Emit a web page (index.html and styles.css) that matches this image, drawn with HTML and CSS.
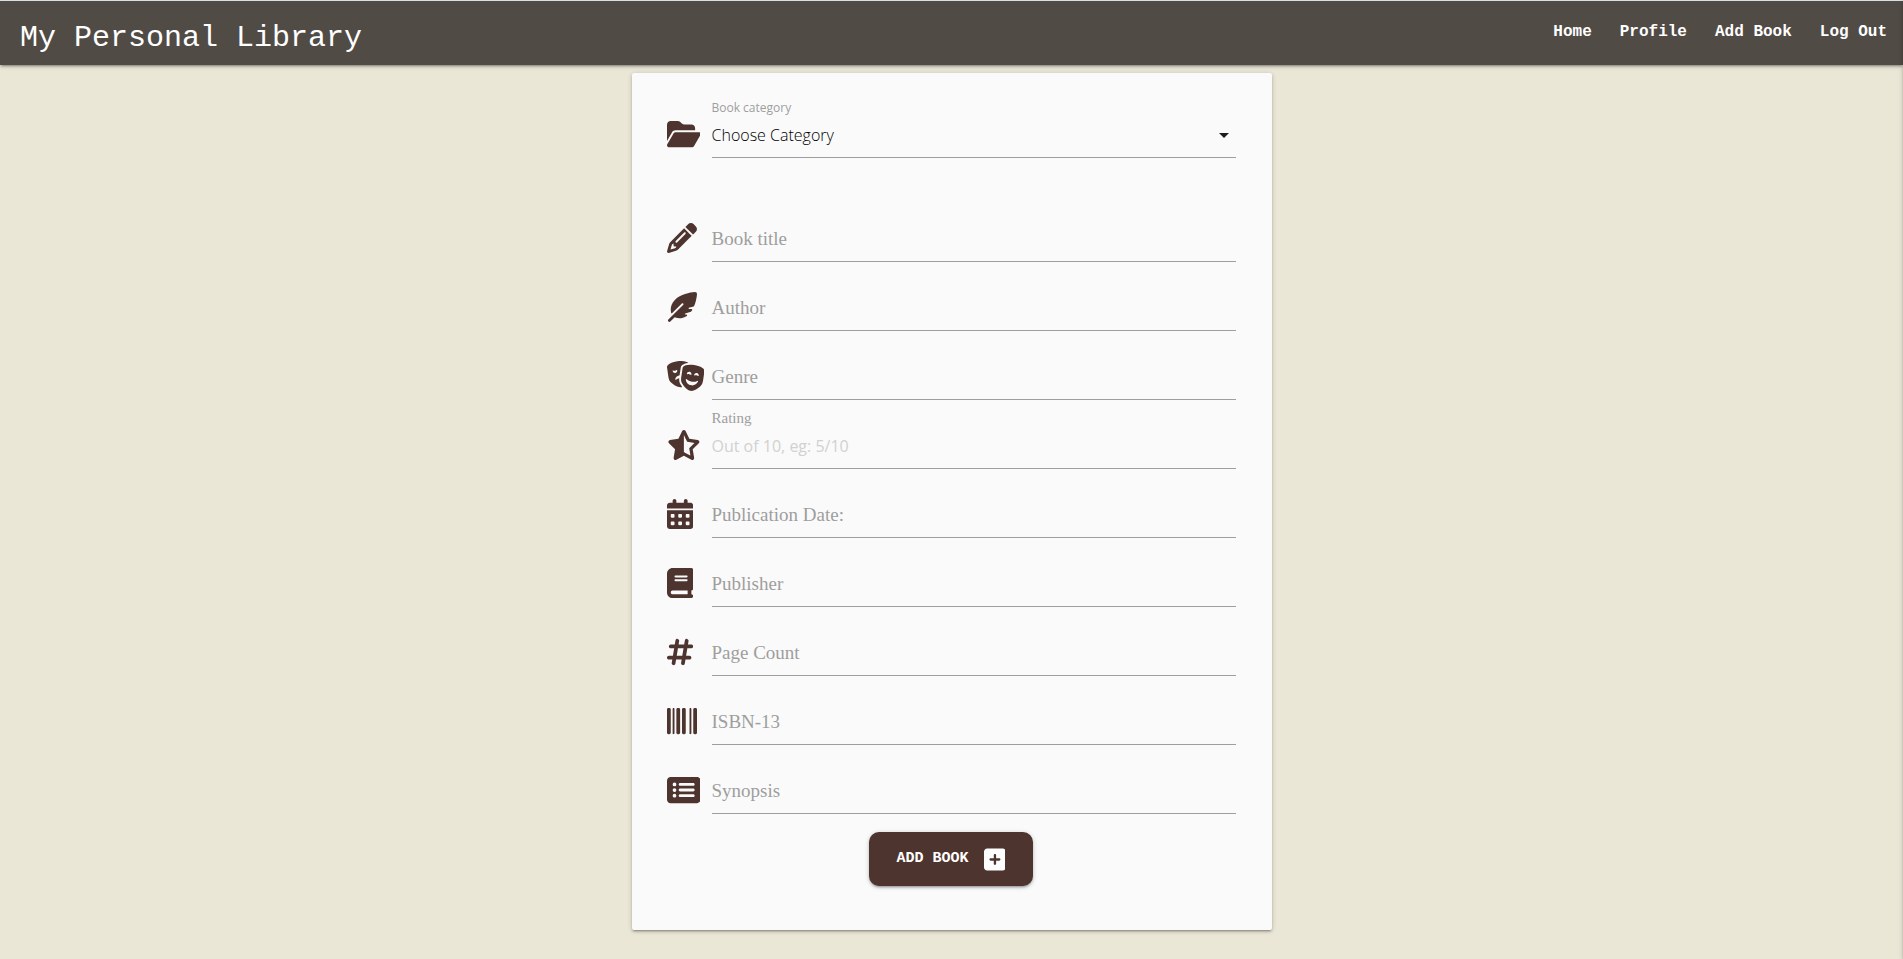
FILE: index.html
```html
<!DOCTYPE html>
<html lang="en">
<head>
<meta charset="utf-8">
<meta name="viewport" content="width=device-width, initial-scale=1">
<title>My Personal Library</title>
<link rel="stylesheet" href="styles.css">
</head>
<body>
<header class="navbar">
  <a class="logo" href="#">My Personal Library</a>
  <nav class="links">
    <a href="#">Home</a>
    <a href="#">Profile</a>
    <a href="#">Add Book</a>
    <a href="#">Log Out</a>
  </nav>
</header>
<aside class="drawer" aria-hidden="true"></aside>
<main>
  <form class="card">
    <div class="row row-select">
      <svg class="icon" viewBox="0 0 576 512"><path d="M88.7 223.8L0 375.8V96C0 60.7 28.7 32 64 32H181.5c17 0 33.3 6.7 45.3 18.7l26.5 26.5c12 12 28.3 18.7 45.3 18.7H416c35.3 0 64 28.7 64 64v32H144c-22.8 0-43.8 12.1-55.3 31.8zm27.6 16.1C122.1 230 132.6 224 144 224H544c11.5 0 22 6.1 27.7 16.1s5.7 22.2-.1 32.1l-112 192C453.9 474 443.4 480 432 480H32c-11.5 0-22-6.1-27.7-16.1s-5.7-22.2 .1-32.1l112-192z"/></svg>
      <div class="field">
        <label class="raised sans" for="category">Book category</label>
        <select id="category"><option>Choose Category</option></select>
        <svg class="caret" viewBox="0 0 24 24"><path d="M7 10l5 5 5-5z"/></svg>
      </div>
    </div>
    <div class="row">
      <svg class="icon" viewBox="0 0 512 512"><path d="M410.3 231l11.3-11.3-33.9-33.9-62.1-62.1L291.7 89.8l-11.3 11.3-22.6 22.6L58.6 322.9c-10.4 10.4-18 23.3-22.2 37.4L1 480.7c-2.5 8.4-.2 17.5 6.1 23.7s15.3 8.5 23.7 6.1l120.3-35.4c14.1-4.2 27-11.8 37.4-22.2L387.7 253.7 410.3 231zM160 399.4l-9.1 22.7c-4 3.1-8.5 5.4-13.3 6.9L59.4 452l23-78.1c1.4-4.9 3.8-9.4 6.9-13.3l22.7-9.1v32c0 8.8 7.2 16 16 16h32zM362.7 18.7L348.3 33.2 325.7 55.8 314.3 67.1l33.9 33.9 62.1 62.1 33.9 33.9 11.3-11.3 22.6-22.6 14.5-14.5c25-25 25-65.5 0-90.5L453.3 18.7c-25-25-65.5-25-90.5 0zm-47.4 168l-144 144c-6.2 6.2-16.4 6.2-22.6 0s-6.2-16.4 0-22.6l144-144c6.2-6.2 16.4-6.2 22.6 0s6.2 16.4 0 22.6z"/></svg>
      <div class="field"><label for="title">Book title</label><input id="title" type="text"></div>
    </div>
    <div class="row">
      <svg class="icon" viewBox="0 0 512 512"><path d="M278.5 215.6L23 471c-9.4 9.4-9.4 24.6 0 33.9s24.6 9.4 33.9 0l74.8-74.8c7.4 4.6 15.3 8.2 23.8 10.5C200.3 452.8 270 454.5 338 409.4c12.2-8.1 5.8-25.4-8.8-25.4l-16.1 0c-5.1 0-9.2-4.1-9.2-9.2c0-4.1 2.7-7.6 6.5-8.8l97.7-29.3c3.4-1 6.4-3.1 8.4-6.1c4.4-6.4 8.6-12.9 12.6-19.6c6.2-10.3-1.5-23-13.5-23l-38.6 0c-5.1 0-9.2-4.1-9.2-9.2c0-4.1 2.7-7.6 6.5-8.8l80.9-24.3c4.6-1.4 8.4-4.8 10.2-9.3C494.5 163 507.8 86.1 511.9 36.8c.8-9.9-3-19.6-10-26.6s-16.7-10.8-26.6-10C391.5 7 228.5 40.5 137.4 131.6C57.3 211.7 56.7 302.3 71.3 356.4c2.1 7.9 12 9.6 17.8 3.8L253.6 195.8c6.2-6.2 16.4-6.2 22.6 0c5.4 5.4 6.1 13.6 2.2 19.8z"/></svg>
      <div class="field"><label for="author">Author</label><input id="author" type="text"></div>
    </div>
    <div class="row">
      <svg class="icon" viewBox="0 0 640 512"><path d="M74.6 373.2c41.7 36.1 108 82.5 166.1 73.7c6.1-.9 12.1-2.5 18-4.5c-9.2-12.3-17.3-24.4-24.2-35.4c-21.9-35-28.8-75.2-25.9-113.6c-20.6 4.1-39.2 13-54.7 25.4c-6.5 5.2-16.3 1.3-14.8-7c6.4-33.5 33-60.9 68.2-66.3c2.6-.4 5.3-.7 7.9-.8l19.4-131.3c2-13.8 8-32.7 25-45.9C278.2 53.2 310.5 37 363.2 32.2c-.8-.7-1.6-1.4-2.4-2.1C340.6 14.5 288.4-11.5 175.7 5.6S20.5 63 5.7 83.9C0 91.9-.8 102 .6 111.8L24.8 276.1c5.5 37.3 21.5 72.6 49.8 97.2zm87.7-219.6c4.4-3.1 10.8-2 11.8 3.3c.1 .5 .2 1.1 .3 1.6c3.2 21.8-11.6 42-33.1 45.3s-41.5-11.8-44.7-33.5c-.1-.5-.1-1.1-.2-1.6c-.6-5.4 5.2-8.4 10.3-6.7c9 3 18.8 3.9 28.7 2.4s19.1-5.3 26.8-10.8zM261.6 390c29.4 46.9 79.5 110.9 137.6 119.7s124.5-37.5 166.1-73.7c28.3-24.5 44.3-59.8 49.8-97.2l24.2-164.3c1.4-9.8 .6-19.9-5.1-27.9c-14.8-20.9-57.3-61.2-170-78.3S299.4 77.2 279.2 92.8c-7.8 6-11.5 15.4-12.9 25.2L242.1 282.3c-5.5 37.3-.4 75.8 19.6 107.7zM404.5 235.3c-7.7-5.5-16.8-9.3-26.8-10.8s-19.8-.6-28.7 2.4c-5.1 1.7-10.9-1.3-10.3-6.7c.1-.5 .1-1.1 .2-1.6c3.2-21.8 23.2-36.8 44.7-33.5s36.3 23.5 33.1 45.3c-.1 .5-.2 1.1-.3 1.6c-1 5.3-7.4 6.4-11.8 3.3zm136.2 15.5c-1 5.3-7.4 6.4-11.8 3.3c-7.7-5.5-16.8-9.3-26.8-10.8s-19.8-.6-28.7 2.4c-5.1 1.7-10.9-1.3-10.3-6.7c.1-.5 .1-1.1 .2-1.6c3.2-21.8 23.2-36.8 44.7-33.5s36.3 23.5 33.1 45.3c-.1 .5-.2 1.1-.3 1.6zM530 350.2c-19.6 44.7-66.8 72.5-116.8 64.9s-87.1-48.2-93-96.7c-1-8.3 8.9-12.1 15.2-6.7c23.9 20.8 53.6 35.3 87 40.3s66.1 .1 94.9-12.8c7.6-3.4 16 3.2 12.6 10.9z"/></svg>
      <div class="field"><label for="genre">Genre</label><input id="genre" type="text"></div>
    </div>
    <div class="row">
      <svg class="icon" viewBox="32 0 576 512"><path d="M320 376.4l.1-.1 26.4 14.1 85.2 45.5-16.5-97.6-4.8-28.7 20.7-20.5 70.1-69.3-96.1-14.2-29.3-4.3-12.9-26.6L320.1 86.9l-.1 .3V376.4zm175.1 98.3c2 12-3 24.2-12.9 31.3s-23 8-33.8 2.3L320.1 439.8 191.8 508.3C181 514 167.9 513.1 158 506s-14.9-19.3-12.9-31.3L169.8 329 65.6 225.9c-8.6-8.5-11.7-21.2-7.9-32.7s13.7-19.9 25.7-21.7L227 150.3 291.4 18c5.4-11 16.5-18 28.8-18s23.4 7 28.8 18l64.3 132.3 143.6 21.2c12 1.8 22 10.2 25.7 21.7s.7 24.2-7.9 32.7L470.5 329l24.6 145.7z"/></svg>
      <div class="field"><label class="raised" for="rating">Rating</label><input id="rating" type="text" placeholder="Out of 10, eg: 5/10"></div>
    </div>
    <div class="row">
      <svg class="icon" viewBox="0 0 448 512"><path d="M128 0c17.7 0 32 14.3 32 32V64H288V32c0-17.7 14.3-32 32-32s32 14.3 32 32V64h48c26.5 0 48 21.5 48 48v48H0V112C0 85.5 21.5 64 48 64H96V32c0-17.7 14.3-32 32-32zM0 192H448V464c0 26.5-21.5 48-48 48H48c-26.5 0-48-21.5-48-48V192zm64 80v32c0 8.8 7.2 16 16 16h32c8.8 0 16-7.2 16-16V272c0-8.8-7.2-16-16-16H80c-8.8 0-16 7.2-16 16zm128 0v32c0 8.8 7.2 16 16 16h32c8.8 0 16-7.2 16-16V272c0-8.8-7.2-16-16-16H208c-8.8 0-16 7.2-16 16zm144-16c-8.8 0-16 7.2-16 16v32c0 8.8 7.2 16 16 16h32c8.8 0 16-7.2 16-16V272c0-8.8-7.2-16-16-16H336zM64 400v32c0 8.8 7.2 16 16 16h32c8.8 0 16-7.2 16-16V400c0-8.8-7.2-16-16-16H80c-8.8 0-16 7.2-16 16zm144-16c-8.8 0-16 7.2-16 16v32c0 8.8 7.2 16 16 16h32c8.8 0 16-7.2 16-16V400c0-8.8-7.2-16-16-16H208zm112 16v32c0 8.8 7.2 16 16 16h32c8.8 0 16-7.2 16-16V400c0-8.8-7.2-16-16-16H336c-8.8 0-16 7.2-16 16z"/></svg>
      <div class="field"><label for="date">Publication Date:</label><input id="date" type="text"></div>
    </div>
    <div class="row">
      <svg class="icon" viewBox="0 0 448 512"><path d="M96 0C43 0 0 43 0 96V416c0 53 43 96 96 96H384h32c17.7 0 32-14.3 32-32s-14.3-32-32-32V384c17.7 0 32-14.3 32-32V32c0-17.7-14.3-32-32-32H384 96zm0 384H352v64H96c-17.7 0-32-14.3-32-32s14.3-32 32-32zm32-240c0-8.8 7.2-16 16-16H336c8.8 0 16 7.2 16 16s-7.2 16-16 16H144c-8.8 0-16-7.2-16-16zm16 48H336c8.8 0 16 7.2 16 16s-7.2 16-16 16H144c-8.8 0-16-7.2-16-16s7.2-16 16-16z"/></svg>
      <div class="field"><label for="publisher">Publisher</label><input id="publisher" type="text"></div>
    </div>
    <div class="row">
      <svg class="icon" viewBox="0 0 448 512"><path d="M181.3 32.4c17.4 2.9 29.2 19.4 26.3 36.8L197.8 128h95.1l11.5-69.3c2.9-17.4 19.4-29.2 36.8-26.3s29.2 19.4 26.3 36.8L357.8 128H416c17.7 0 32 14.3 32 32s-14.3 32-32 32H347.1L325.8 320H384c17.7 0 32 14.3 32 32s-14.3 32-32 32H315.1l-11.5 69.3c-2.9 17.4-19.4 29.2-36.8 26.3s-29.2-19.4-26.3-36.8l9.8-58.7H155.1l-11.5 69.3c-2.9 17.4-19.4 29.2-36.8 26.3s-29.2-19.4-26.3-36.8L90.2 384H32c-17.7 0-32-14.3-32-32s14.3-32 32-32h68.9l21.3-128H64c-17.7 0-32-14.3-32-32s14.3-32 32-32h68.9l11.5-69.3c2.9-17.4 19.4-29.2 36.8-26.3zM187.1 192L165.8 320h95.1l21.3-128H187.1z"/></svg>
      <div class="field"><label for="pages">Page Count</label><input id="pages" type="text"></div>
    </div>
    <div class="row">
      <svg class="icon" viewBox="0 0 512 512"><path d="M24 32C10.7 32 0 42.7 0 56V456c0 13.3 10.7 24 24 24H40c13.3 0 24-10.7 24-24V56c0-13.3-10.7-24-24-24H24zm88 0c-8.8 0-16 7.2-16 16V464c0 8.8 7.2 16 16 16s16-7.2 16-16V48c0-8.8-7.2-16-16-16zm72 0c-13.3 0-24 10.7-24 24V456c0 13.3 10.7 24 24 24h16c13.3 0 24-10.7 24-24V56c0-13.3-10.7-24-24-24H184zm96 0c-13.3 0-24 10.7-24 24V456c0 13.3 10.7 24 24 24h16c13.3 0 24-10.7 24-24V56c0-13.3-10.7-24-24-24H280zM448 56V456c0 13.3 10.7 24 24 24h16c13.3 0 24-10.7 24-24V56c0-13.3-10.7-24-24-24H472c-13.3 0-24 10.7-24 24zm-64-8V464c0 8.8 7.2 16 16 16s16-7.2 16-16V48c0-8.8-7.2-16-16-16s-16 7.2-16 16z"/></svg>
      <div class="field"><label for="isbn">ISBN-13</label><input id="isbn" type="text"></div>
    </div>
    <div class="row">
      <svg class="icon" viewBox="0 0 576 512"><path d="M0 96C0 60.7 28.7 32 64 32H512c35.3 0 64 28.7 64 64V416c0 35.3-28.7 64-64 64H64c-35.3 0-64-28.7-64-64V96zM128 288a32 32 0 1 0 0-64 32 32 0 1 0 0 64zm32-128a32 32 0 1 0 -64 0 32 32 0 1 0 64 0zM128 384a32 32 0 1 0 0-64 32 32 0 1 0 0 64zm96-248c-13.3 0-24 10.7-24 24s10.7 24 24 24H448c13.3 0 24-10.7 24-24s-10.7-24-24-24H224zm0 96c-13.3 0-24 10.7-24 24s10.7 24 24 24H448c13.3 0 24-10.7 24-24s-10.7-24-24-24H224zm0 96c-13.3 0-24 10.7-24 24s10.7 24 24 24H448c13.3 0 24-10.7 24-24s-10.7-24-24-24H224z"/></svg>
      <div class="field"><label for="synopsis">Synopsis</label><input id="synopsis" type="text"></div>
    </div>
    <button class="submit" type="submit">
      <span>ADD BOOK</span>
      <svg viewBox="0 0 448 512"><path d="M64 32C28.7 32 0 60.7 0 96V416c0 35.3 28.7 64 64 64H384c35.3 0 64-28.7 64-64V96c0-35.3-28.7-64-64-64H64zM200 344V280H136c-13.3 0-24-10.7-24-24s10.7-24 24-24h64V168c0-13.3 10.7-24 24-24s24 10.7 24 24v64h64c13.3 0 24 10.7 24 24s-10.7 24-24 24H248v64c0 13.3-10.7 24-24 24s-24-10.7-24-24z"/></svg>
    </button>
  </form>
</main>
</body>
</html>
```
FILE: styles.css
```css
*, *::before, *::after {
  box-sizing: border-box;
}

body {
  margin: 0;
  background: #ebe7d7;
  color: #000;
  font-family: "Open Sans", "Noto Sans", sans-serif;
  font-size: 16px;
}

.navbar {
  display: flex;
  justify-content: space-between;
  align-items: center;
  height: 65px;
  padding: 0 16px 0 20px;
  border-top: 1px solid #dadfe0;
  background: #514b46;
  box-shadow: 0 2px 2px 0 rgba(0, 0, 0, 0.14), 0 3px 1px -2px rgba(0, 0, 0, 0.12), 0 1px 5px 0 rgba(0, 0, 0, 0.2);
  font-family: "Liberation Mono", monospace;
  font-weight: 700;
}

.navbar a {
  color: #fff;
  text-decoration: none;
}

.logo {
  padding-top: 10px;
  font-size: 30px;
  font-weight: 400;
}

.links {
  display: flex;
  gap: 28px;
  padding-bottom: 2px;
  font-size: 16px;
}

.drawer {
  position: fixed;
  top: 0;
  right: -300px;
  width: 300px;
  height: 100%;
  box-shadow: 0 2px 2px 0 rgba(0, 0, 0, 0.14), 0 3px 1px -2px rgba(0, 0, 0, 0.12), 0 1px 5px 0 rgba(0, 0, 0, 0.2);
}

main {
  display: flex;
  justify-content: center;
  padding: 8px 12px 28px;
}

.card {
  display: flex;
  flex-direction: column;
  gap: 20px;
  width: 100%;
  max-width: 640px;
  padding: 36px 36px 44px 35px;
  border-radius: 2px;
  background: #fafafa;
  box-shadow: 0 2px 2px 0 rgba(0, 0, 0, 0.14), 0 3px 1px -2px rgba(0, 0, 0, 0.12), 0 1px 5px 0 rgba(0, 0, 0, 0.2);
}

.row {
  display: grid;
  grid-template-columns: 45px 1fr;
  align-items: center;
}

.row-select {
  margin-bottom: 35px;
}

.icon {
  height: 30px;
  fill: #4e342e;
}

.field {
  position: relative;
}

.field input,
.field select {
  display: block;
  width: 100%;
  height: 49px;
  padding: 4px 0 0;
  border: 0;
  border-bottom: 1px solid #9e9e9e;
  border-radius: 0;
  outline: 0;
  background: transparent;
  color: #000;
  font: inherit;
  appearance: none;
}

.field select {
  font-weight: 300;
}

.field input::placeholder {
  color: #d1d1d1;
}

.field label {
  position: absolute;
  top: 0;
  left: 0;
  color: #9e9e9e;
  font-family: "Liberation Serif", serif;
  font-size: 19px;
  line-height: 51px;
  pointer-events: none;
}

.field .raised {
  top: -12px;
  font-size: 15px;
  line-height: 20px;
}

.field .sans {
  top: -11px;
  font-family: "Open Sans", "Noto Sans", sans-serif;
  font-size: 12px;
}

.caret {
  position: absolute;
  top: 14px;
  right: 0;
  width: 24px;
  height: 24px;
  fill: #1c1c1c;
  pointer-events: none;
}

.submit {
  display: flex;
  align-items: center;
  align-self: center;
  gap: 15px;
  height: 54px;
  margin-top: -2px;
  padding: 0 28px;
  border: 0;
  border-radius: 10px;
  background: #4e342e;
  color: #fff;
  box-shadow: 0 2px 2px 0 rgba(0, 0, 0, 0.14), 0 3px 1px -2px rgba(0, 0, 0, 0.12), 0 1px 5px 0 rgba(0, 0, 0, 0.2);
  font-family: "Liberation Mono", monospace;
  font-size: 15px;
  font-weight: 700;
}

.submit span {
  padding-bottom: 2px;
}

.submit svg {
  height: 25px;
  fill: #fff;
}
```
